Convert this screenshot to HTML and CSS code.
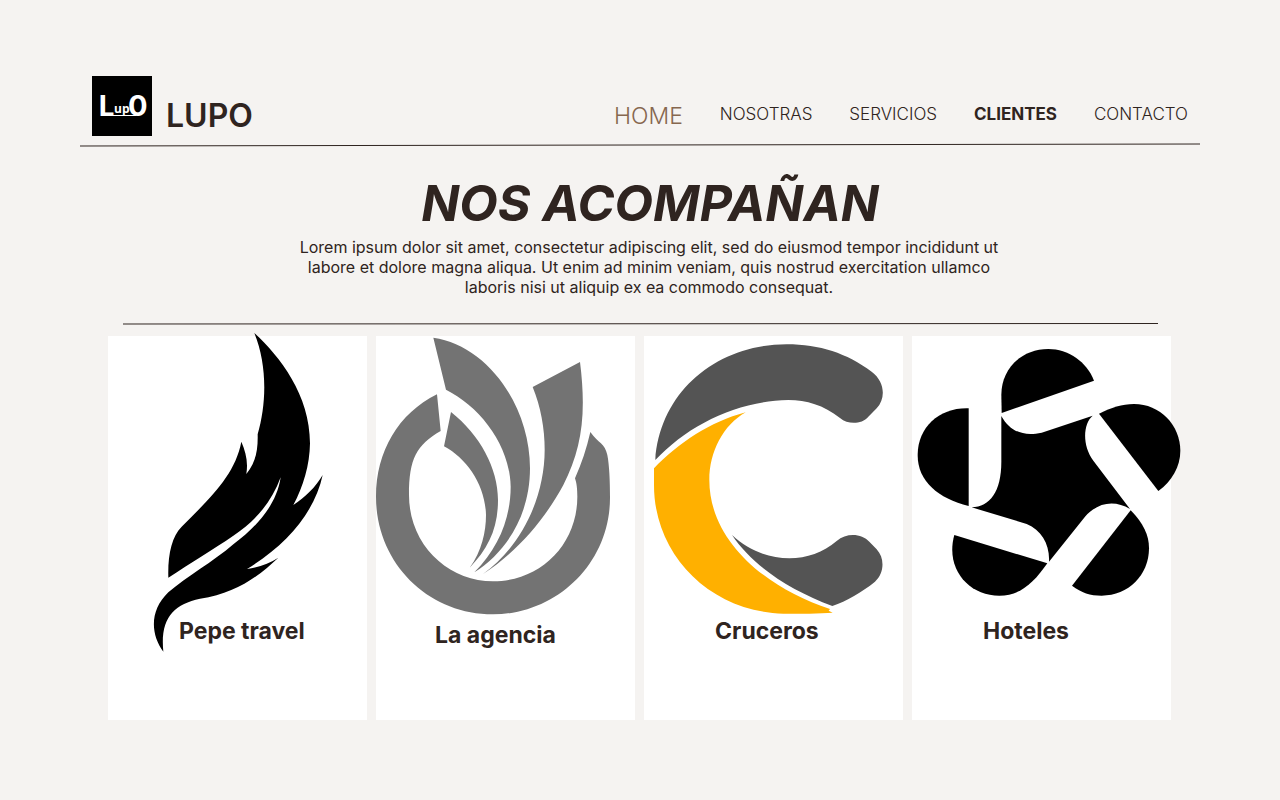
FILE: index.html
```html
<!DOCTYPE html>
<html lang="es">
<head>
<meta charset="utf-8">
<meta name="viewport" content="width=device-width, initial-scale=1">
<title>LUPO - Clientes</title>
<link rel="stylesheet" href="styles.css">
</head>
<body>
<div class="page">
  <header class="header">
    <a class="brand" href="#">
      <svg class="brand-mark" viewBox="0 0 60 60" aria-hidden="true">
        <rect width="60" height="60" fill="#000"/>
        <text class="mark-big" x="6" y="40">L</text>
        <text class="mark-small" x="22" y="37">up</text>
        <text class="mark-big mark-heavy" x="36" y="40">0</text>
        <path d="M20 39.500H44" stroke="#fff" stroke-width="1"/>
      </svg>
      <span class="brand-name">LUPO</span>
    </a>
    <nav class="nav">
      <a class="nav-link nav-home" href="#">HOME</a>
      <a class="nav-link" href="#">NOSOTRAS</a>
      <a class="nav-link" href="#">SERVICIOS</a>
      <a class="nav-link nav-current" href="#" aria-current="page">CLIENTES</a>
      <a class="nav-link" href="#">CONTACTO</a>
    </nav>
  </header>
  <svg class="rule" viewBox="0 0 1120 4" preserveAspectRatio="none" aria-hidden="true"><path d="M0 3L1120 1"/></svg>

  <main>
    <section class="intro">
      <h1 class="title">NOS ACOMPAÑAN</h1>
      <p class="text">Lorem ipsum dolor sit amet, consectetur adipiscing elit, sed do eiusmod tempor incididunt ut<br>labore et dolore magna aliqua. Ut enim ad minim veniam, quis nostrud exercitation ullamco<br>laboris nisi ut aliquip ex ea commodo consequat.</p>
    </section>
    <div class="divider">
      <svg class="rule" viewBox="0 0 1035 4" preserveAspectRatio="none" aria-hidden="true"><path d="M0 2L1035 1.500"/></svg>
    </div>
    <section class="cards">
      <article class="card">
        <svg class="logo" viewBox="24 63 777 837" aria-hidden="true">
          <path d="M463 54C540 125 630 240 630 385C629 450 610 515 580 570C615 548 648 515 668 480C645 590 560 690 441 762C475 757 508 745 535 728C480 780 410 835 300 851C220 868 180 910 190 1010C150 955 150 885 205 832C260 785 340 740 400 688C470 635 530 570 542 487C515 560 470 615 400 662C340 703 270 745 205 788C203 720 215 665 245 635C330 550 405 480 424 380C437 410 445 440 439 477C468 440 474 405 473 358C500 265 502 150 463 54Z"/>
        </svg>
        <h2 class="label">Pepe travel</h2>
      </article>
      <article class="card card-agency">
        <svg class="logo" viewBox="18 63 777 837" fill="#737373" aria-hidden="true">
          <path d="M201 238L212 348C140 390 117 430 117 540C117 690 235 799 369 799C510 799 622 690 622 545C622 520 620 505 615 490C635 445 650 400 661 351C685 385 705 385 712 420C718 450 720 500 720 548C720 745 560 898 369 898C175 898 18 745 18 545C18 410 85 295 201 238Z"/>
          <path d="M190 68C350 90 480 270 480 460C480 600 410 710 313 772C385 700 422 610 422 515C420 390 330 275 228 224Z"/>
          <path d="M243 291C330 360 384 460 384 555C384 640 355 700 299 758C335 710 348 650 348 600C346 510 290 430 222 394Z"/>
          <path d="M488 216L630 141C650 300 635 400 580 510C520 620 440 710 339 777C460 690 524 540 524 405C524 340 512 275 488 216Z"/>
        </svg>
        <h2 class="label">La agencia</h2>
      </article>
      <article class="card">
        <svg class="logo" viewBox="12 63 777 837" fill="#545454" aria-hidden="true">
          <path d="M46 435C60 230 230 88 440 88C540 88 620 115 695 170C735 200 738 250 710 280L685 305C665 328 625 330 600 309C550 270 500 255 445 255C290 258 145 330 46 435Z"/>
          <path fill="#ffb000" d="M42 460C115 385 210 320 317 292C250 330 208 410 208 495C208 680 380 820 570 882L566 887L578 893C540 896 480 896 430 896C210 890 42 720 42 510Z"/>
          <path d="M276 660C325 705 385 730 448 730C500 730 550 712 590 678C620 652 665 655 688 680L710 703C735 730 733 775 705 800C665 832 620 858 577 873C450 825 340 755 276 660Z"/>
        </svg>
        <h2 class="label">Cruceros</h2>
      </article>
      <article class="card">
        <svg class="logo" viewBox="21 63 777 837" aria-hidden="true">
          <path d="M290 294L289 240C289 160 350 102 430 102C490 102 545 140 567 197Z"/>
          <path d="M582 296C620 278 650 267 687 267C765 267 826 330 826 408C826 455 800 500 760 528Z"/>
          <path d="M677 586C715 625 732 660 732 700C732 780 670 842 590 842C555 842 530 833 501 812Z"/>
          <path d="M148 660L427 745C385 805 345 842 283 842C190 842 120 760 148 660Z"/>
          <path d="M191 280L191 573C100 550 38 500 38 420C38 335 105 277 191 280Z"/>
          <path d="M289 303C315 350 355 365 410 353L563 302C535 325 530 390 565 437L675 582C630 555 580 560 540 605L432 740C435 690 410 645 365 627L200 577C255 575 289 530 289 440Z"/>
        </svg>
        <h2 class="label">Hoteles</h2>
      </article>
    </section>
  </main>
</div>
</body>
</html>
```
FILE: styles.css
```css
* { box-sizing: border-box; }

body {
  margin: 0;
  background: #f5f3f1;
  color: #2f2420;
  font-family: Inter, "Liberation Sans", sans-serif;
}

a { color: inherit; text-decoration: none; }

.page { padding: 76px 80px 80px; }

.header {
  display: flex;
  justify-content: space-between;
  align-items: center;
  padding: 0 12px;
}

.brand { display: flex; align-items: center; gap: 14px; }
.brand-mark { width: 60px; height: 60px; }
.mark-big, .mark-small {
  fill: #fff;
  font-family: "Open Sans", sans-serif;
  font-weight: 700;
}
.mark-big { font-size: 29px; }
.mark-heavy { font-family: Inter, sans-serif; }
.mark-small { font-size: 12px; }
.brand-name {
  padding-top: 20px;
  font-size: 32px;
  line-height: 40px;
  font-weight: 600;
}

.nav {
  display: flex;
  flex: 0 1 574px;
  justify-content: space-between;
  align-items: center;
  padding-top: 16px;
  white-space: nowrap;
}
.nav-link { font-size: 17px; line-height: 24px; font-weight: 300; }
.nav-home { padding-top: 4px; font-size: 23px; color: #86674f; }
.nav-current { font-weight: 700; }

.rule {
  display: block;
  width: 100%;
  height: 4px;
  fill: none;
  stroke: #2f2420;
  stroke-width: 1;
}
.header + .rule { margin-top: 7px; }

.intro { padding-top: 28px; text-align: center; }
.title {
  margin: 0;
  padding-left: 20px;
  font-size: 50px;
  line-height: 56px;
  font-weight: 700;
  font-style: italic;
}
.text {
  margin: 6px 0 0;
  padding-left: 18px;
  font-size: 16px;
  line-height: 20px;
}

.divider { padding: 25px 42px 0 43px; }

.cards {
  display: grid;
  grid-template-columns: repeat(4, 1fr);
  gap: 9px;
  padding: 10px 29px 0 28px;
}
.card { min-height: 384px; background: #fff; }
.logo { display: block; width: 100%; overflow: visible; }
.label {
  margin: 0;
  padding: 4px 0 0 71px;
  font-size: 23px;
  line-height: 24px;
  font-weight: 700;
}
.card-agency .label { padding: 8px 0 0 59px; }
```
